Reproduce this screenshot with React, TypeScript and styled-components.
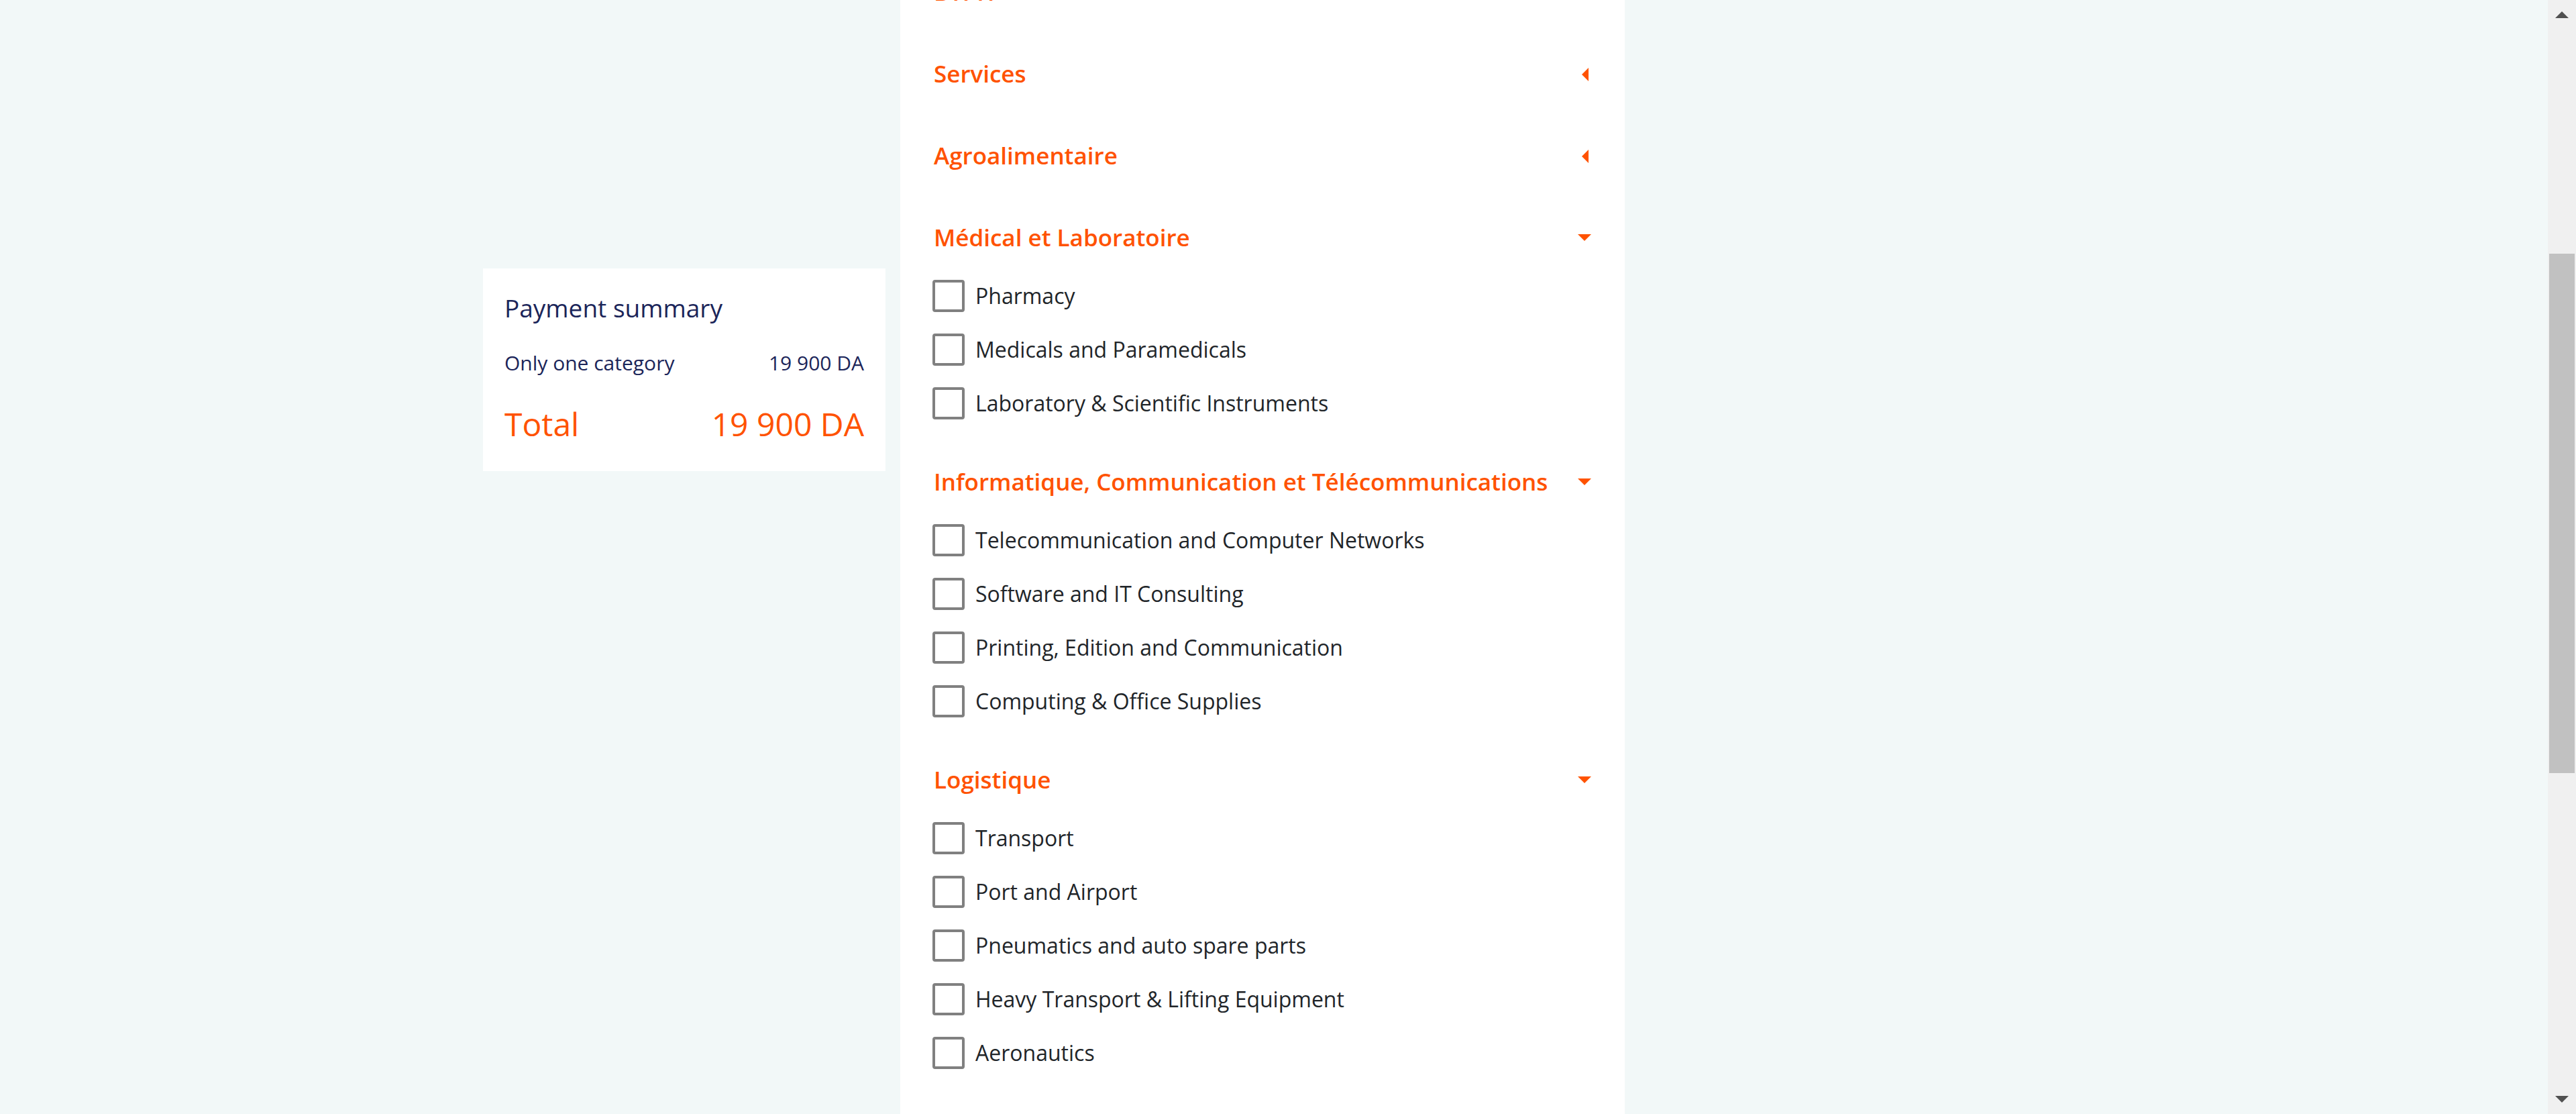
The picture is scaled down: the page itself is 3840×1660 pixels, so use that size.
import React, { useState } from "react";
import styled, { createGlobalStyle } from "styled-components";

const ORANGE = "#ff5200";
const NAVY = "#1b2559";

const GlobalStyle = createGlobalStyle`
  *, *::before, *::after {
    box-sizing: border-box;
  }
  body {
    margin: 0;
    background: #f2f8f8;
    color: #212529;
    font-family: "Open Sans", "Noto Sans", sans-serif;
  }
`;

const Screen = styled.div`
  display: flex;
  height: 100vh;
  overflow: hidden;
`;

const Page = styled.main`
  flex: 1;
  min-width: 0;
  overflow: hidden;
`;

const Container = styled.div`
  display: grid;
  grid-template-columns: 600fr 1080fr 634fr;
  column-gap: 22px;
  max-width: 2358px;
  min-height: 100%;
  margin: 0 auto;
`;

const SummaryCard = styled.aside`
  align-self: start;
  display: flex;
  flex-direction: column;
  gap: 32px;
  margin-top: 400px;
  padding: 32px 32px 34px;
  background: #fff;
  color: ${NAVY};
`;

const SummaryTitle = styled.h2`
  margin: 0;
  font-size: 37px;
  font-weight: 400;
  line-height: 54px;
`;

const SummaryRow = styled.div<{ $total?: boolean }>`
  display: flex;
  justify-content: space-between;
  color: ${(p) => (p.$total ? ORANGE : "inherit")};
  font-size: ${(p) => (p.$total ? 48 : 30)}px;
  line-height: ${(p) => (p.$total ? 72 : 46)}px;
`;

/* The list is shown part-way through its scroll. */
const Panel = styled.section`
  margin-top: -72px;
  background: #fff;
`;

const GroupTitle = styled.h3`
  margin: 0;
`;

const GroupToggle = styled.button`
  display: flex;
  align-items: center;
  justify-content: space-between;
  width: 100%;
  height: 122px;
  padding: 0 50px;
  border: 0;
  background: none;
  color: ${ORANGE};
  font: 600 35px/48px "Open Sans", "Noto Sans", sans-serif;
  text-align: left;
  white-space: nowrap;
  cursor: pointer;
`;

const GroupName = styled.span`
  padding-bottom: 3px;
`;

const Caret = styled.svg`
  flex: none;
  width: 20px;
  height: 20px;
  fill: currentColor;
`;

const Options = styled.ul`
  display: flex;
  flex-direction: column;
  gap: 32px;
  margin: 0;
  padding: 1px 48px 33px;
  list-style: none;
`;

const Option = styled.label`
  display: flex;
  align-items: center;
  gap: 16px;
  font-size: 32px;
  line-height: 48px;
  cursor: pointer;
`;

const Checkbox = styled.input`
  appearance: none;
  flex: none;
  width: 48px;
  height: 48px;
  margin: 0;
  border: 4px solid #808080;
  border-radius: 4px;
  background: #fff;

  &:checked {
    border-color: ${ORANGE};
    background: ${ORANGE};
  }
`;

const ScrollBar = styled.div`
  display: flex;
  flex-direction: column;
  flex: none;
  width: 42px;
  background: #f0f0f0;
`;

const ScrollButton = styled.button`
  display: flex;
  align-items: center;
  justify-content: center;
  height: 44px;
  padding: 0;
  border: 0;
  background: none;
  color: #505050;
`;

const ScrollArrow = styled.svg`
  width: 20px;
  height: 10px;
  fill: currentColor;
`;

const Gap = styled.div<{ $size: number }>`
  flex: ${(p) => p.$size} 0 0;
`;

const Thumb = styled.div`
  flex: 774 0 0;
  margin: 0 2px;
  background: #c1c1c1;
`;

type Group = { name: string; open: boolean; options: string[] };

const GROUPS: Group[] = [
  { name: "BTPH", open: false, options: [] },
  { name: "Services", open: false, options: [] },
  { name: "Agroalimentaire", open: false, options: [] },
  {
    name: "Médical et Laboratoire",
    open: true,
    options: ["Pharmacy", "Medicals and Paramedicals", "Laboratory & Scientific Instruments"],
  },
  {
    name: "Informatique, Communication et Télécommunications",
    open: true,
    options: [
      "Telecommunication and Computer Networks",
      "Software and IT Consulting",
      "Printing, Edition and Communication",
      "Computing & Office Supplies",
    ],
  },
  {
    name: "Logistique",
    open: true,
    options: [
      "Transport",
      "Port and Airport",
      "Pneumatics and auto spare parts",
      "Heavy Transport & Lifting Equipment",
      "Aeronautics",
    ],
  },
];

function CategoryGroup({ group }: { group: Group }) {
  const [open, setOpen] = useState(group.open);
  return (
    <div>
      <GroupTitle>
        <GroupToggle type="button" aria-expanded={open} onClick={() => setOpen(!open)}>
          <GroupName>{group.name}</GroupName>
          <Caret viewBox="0 0 20 20" aria-hidden="true">
            <polygon points={open ? "0,4 20,4 10,14" : "16,0 16,20 6,10"} />
          </Caret>
        </GroupToggle>
      </GroupTitle>
      {open && group.options.length > 0 && (
        <Options>
          {group.options.map((option) => (
            <li key={option}>
              <Option>
                <Checkbox type="checkbox" />
                <span>{option}</span>
              </Option>
            </li>
          ))}
        </Options>
      )}
    </div>
  );
}

export default function App() {
  return (
    <>
      <GlobalStyle />
      <Screen>
        <Page>
          <Container>
            <SummaryCard>
              <SummaryTitle>Payment summary</SummaryTitle>
              <SummaryRow>
                <span>Only one category</span>
                <span>19 900 DA</span>
              </SummaryRow>
              <SummaryRow $total>
                <span>Total</span>
                <span>19 900 DA</span>
              </SummaryRow>
            </SummaryCard>
            <Panel>
              {GROUPS.map((group) => (
                <CategoryGroup key={group.name} group={group} />
              ))}
            </Panel>
          </Container>
        </Page>
        <ScrollBar>
          <ScrollButton type="button" aria-label="Scroll up">
            <ScrollArrow viewBox="0 0 20 10" aria-hidden="true">
              <polygon points="10,0 20,10 0,10" />
            </ScrollArrow>
          </ScrollButton>
          <Gap $size={334} />
          <Thumb />
          <Gap $size={464} />
          <ScrollButton type="button" aria-label="Scroll down">
            <ScrollArrow viewBox="0 0 20 10" aria-hidden="true">
              <polygon points="0,0 20,0 10,10" />
            </ScrollArrow>
          </ScrollButton>
        </ScrollBar>
      </Screen>
    </>
  );
}
